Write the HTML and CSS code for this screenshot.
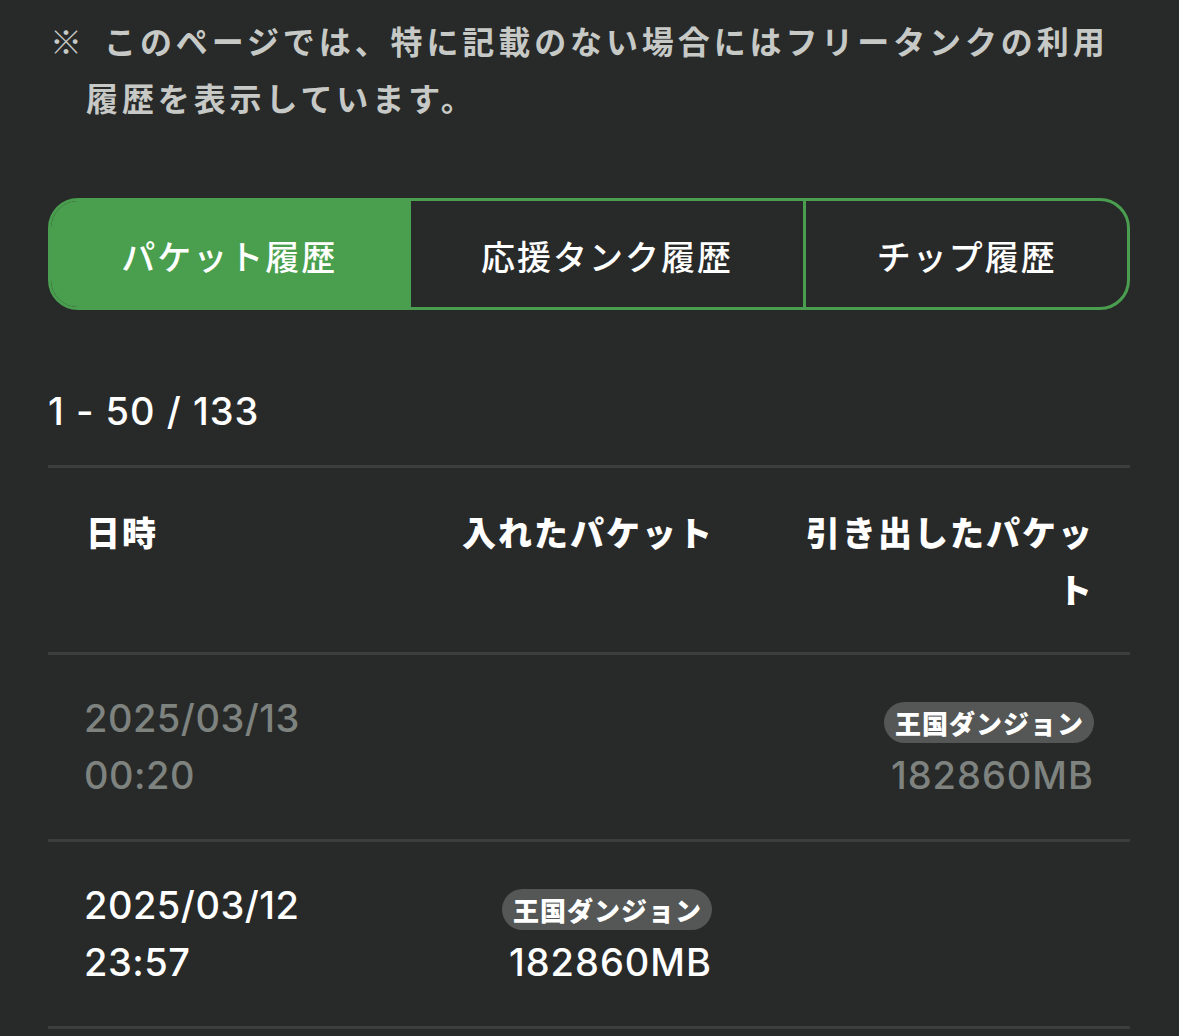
FILE: index.html
```html
<!DOCTYPE html>
<html lang="ja">
<head>
<meta charset="utf-8">
<link rel="stylesheet" href="styles.css">
</head>
<body>
<div class="page">
  <p class="note"><span class="mark">※</span>このページでは、特に記載のない場合にはフリータンクの利用履歴を表示しています。</p>

  <div class="tabs">
    <div class="tab active">パケット履歴</div>
    <div class="tab">応援タンク履歴</div>
    <div class="tab">チップ履歴</div>
  </div>

  <div class="count">1 - 50 / 133</div>

  <div class="table">
    <div class="row head">
      <div class="c1">日時</div>
      <div class="c2 nowrap">入れたパケット</div>
      <div class="c3">引き出したパケット</div>
    </div>
    <div class="row muted">
      <div class="c1"><div class="ln">2025/03/13</div><div class="ln">00:20</div></div>
      <div class="c2"></div>
      <div class="c3"><div class="ln"><span class="badge">王国ダンジョン</span></div><div class="ln">182860MB</div></div>
    </div>
    <div class="row">
      <div class="c1"><div class="ln">2025/03/12</div><div class="ln">23:57</div></div>
      <div class="c2"><div class="ln"><span class="badge">王国ダンジョン</span></div><div class="ln">182860MB</div></div>
      <div class="c3"></div>
    </div>
  </div>
</div>
</body>
</html>
```

FILE: styles.css
```css
html, body {
  margin: 0;
  padding: 0;
  background: #282a29;
}
body {
  font-family: "Noto Sans CJK JP", "Noto Sans", sans-serif;
  color: #ffffff;
  height: 1036px;
  overflow: hidden;
}
.page {
  width: 1082px;
  padding: 12px 0 0 48px;
}
.note {
  margin: 0;
  font-size: 32px;
  line-height: 57px;
  letter-spacing: 3.9px;
  color: #c6c9c6;
  padding-left: 38px;
  text-indent: -36px;
  font-weight: 700;
}
.mark {
  display: inline-block;
  width: 54px;
  text-indent: 0;
  letter-spacing: 0;
  font-weight: 400;
}
.tabs {
  margin-top: 72px;
  display: flex;
  height: 106px;
  border: 3px solid #4a9e4f;
  border-radius: 30px;
  overflow: hidden;
}
.tab {
  flex: 1 1 auto;
  display: flex;
  align-items: center;
  justify-content: center;
  font-size: 34px;
  font-weight: 500;
  letter-spacing: 2px;
  color: #ffffff;
  border-left: 3px solid #4a9e4f;
  padding-top: 2px;
}
.tab:first-child {
  border-left: none;
}
.tab.active {
  background: #4a9f4e;
}
.count {
  margin-top: 73px;
  font-family: Inter, "Liberation Sans", sans-serif;
  font-size: 38px;
  line-height: 57px;
  font-weight: 500;
  letter-spacing: 1px;
}
.table {
  margin-top: 25px;
}
.row {
  display: grid;
  grid-template-columns: 1fr 250px 290px;
  column-gap: 92px;
  padding: 35px 36px 35px 36px;
  border-top: 3px solid #3c3e3d;
  line-height: 57px;
  font-family: Inter, "Noto Sans CJK JP", sans-serif;
  font-size: 38px;
  font-weight: 500;
  letter-spacing: 1px;
}
.row .c1 {
  letter-spacing: 0.5px;
}
.row:last-child {
  border-bottom: 3px solid #3c3e3d;
}
.row.head {
  font-family: "Noto Sans CJK JP", sans-serif;
  font-size: 34px;
  font-weight: 900;
  letter-spacing: 2px;
  padding-left: 38px;
}
.row.head .c1 {
  letter-spacing: 2px;
}
.row.muted {
  color: #7e8380;
}
.c2, .c3 {
  text-align: right;
}
.c2:empty, .c3:empty {
  min-height: 114px;
}
.nowrap {
  white-space: nowrap;
}
.ln {
  height: 57px;
}
.badge {
  display: inline-block;
  vertical-align: top;
  margin-top: 12px;
  height: 41px;
  line-height: 41px;
  padding: 0 10px 0 11px;
  border-radius: 21px;
  background: #545755;
  color: #ffffff;
  font-family: "Noto Sans CJK JP", sans-serif;
  font-size: 26px;
  font-weight: 900;
  letter-spacing: 1px;
}
```
